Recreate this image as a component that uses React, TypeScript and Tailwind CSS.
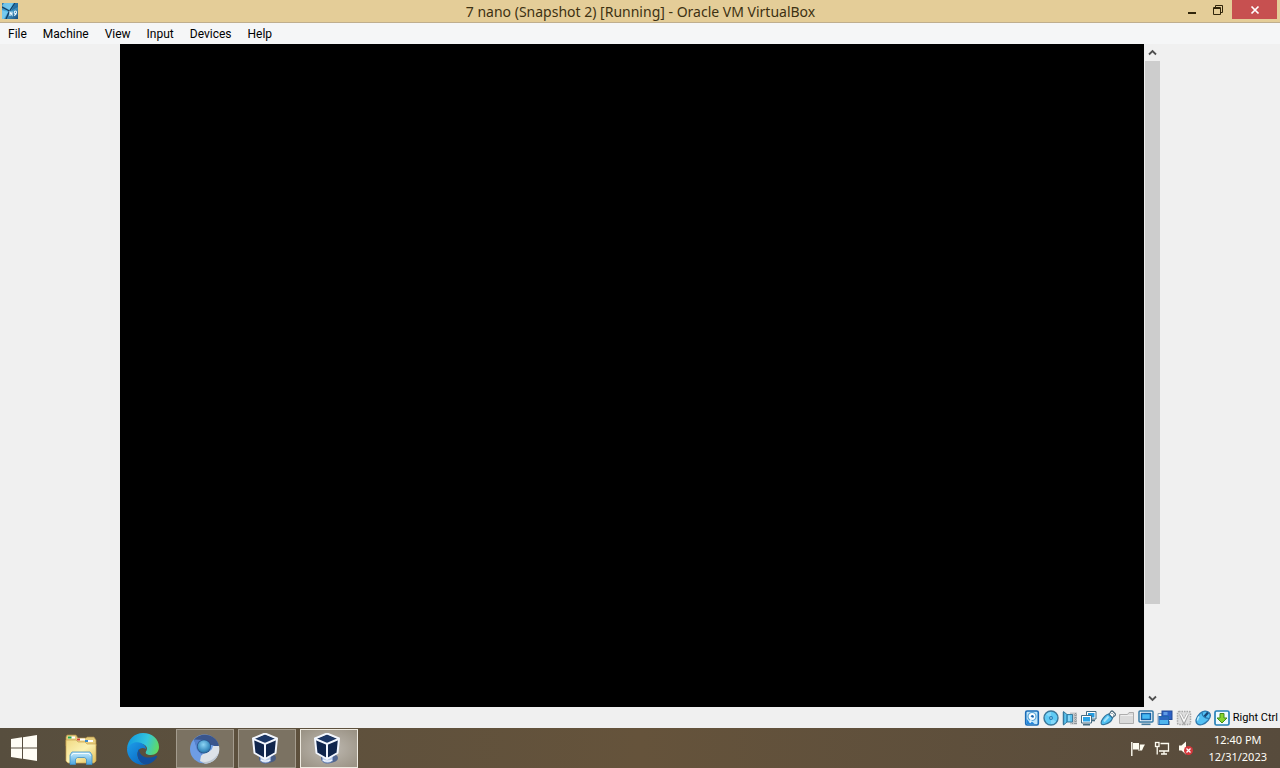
import type { ReactNode } from 'react';

const menus = ['File', 'Machine', 'View', 'Input', 'Devices', 'Help'];

function Svg({ box, className, children }: { box: string; className: string; children: ReactNode }) {
  return (
    <svg viewBox={box} className={className} fill="none" aria-hidden="true">
      {children}
    </svg>
  );
}

function AppIcon() {
  return (
    <Svg box="0 0 16 16" className="size-4 shrink-0">
      <defs>
        <linearGradient id="appBg" x1="0" y1="0" x2="1" y2="1">
          <stop offset="0" stopColor="#2c78ac" />
          <stop offset="0.4" stopColor="#4db4e4" />
          <stop offset="1" stopColor="#1b4c7c" />
        </linearGradient>
      </defs>
      <rect width="16" height="16" fill="url(#appBg)" />
      <path d="M2 0h9L8 7 0 3ZM0 7l6 2-4 7H0Z" fill="#7fd0f2" opacity=".8" />
      <path d="M0 4 7.5 8 13 0M7.5 8 4 16" stroke="#123b60" strokeWidth="1.3" />
      <path d="M13 0h3v4L9 8Z" fill="#1d5d92" opacity=".7" />
      <path d="M8 13V9l2 3V8.5M12 12.5c3-1 3-4.5 1.5-4.5s-2 3 .5 2.5" stroke="#e9f6fd" strokeWidth="1.1" />
    </Svg>
  );
}

const deviceIcons: { label: string; art: ReactNode }[] = [
  {
    label: 'Hard disks',
    art: (
      <>
        <rect x="1.7" y="1" width="12.6" height="14" rx="1.5" fill="#bfe6fb" stroke="#1a6cb8" strokeWidth="1.6" />
        <path d="M2.5 14V8.5l3 4 3-.5 2 2Z" fill="#2286dd" />
        <circle cx="8" cy="6.5" r="4" fill="#fff" stroke="#5aa6d8" strokeWidth="1.2" />
        <circle cx="8.3" cy="6.5" r="1.5" fill="#1565b0" />
        <path d="M8 7 6 13" stroke="#e4f5ff" strokeWidth="1.3" />
      </>
    ),
  },
  {
    label: 'Optical drives',
    art: (
      <>
        <circle cx="8" cy="8" r="7" fill="#5fcaf4" stroke="#3b7799" strokeWidth="1.4" />
        <path d="M8 8 3 4.5A6 6 0 0 1 8 2ZM8 8l5 3.5A6 6 0 0 1 8 14Z" fill="#83d8f9" />
        <circle cx="8" cy="8" r="1.9" fill="#1d79b5" />
        <circle cx="8" cy="8" r=".8" fill="#d9f3ff" />
      </>
    ),
  },
  {
    label: 'Audio',
    art: (
      <>
        <path d="M8 2.5h7v12H8z" fill="#c4c7c9" />
        <path d="M13.5 3v11M10 5h5M10 8h5M10 11h5M10 13.5h5" stroke="#8f9599" strokeDasharray="1 1" />
        <path d="M1.5 1.5 5 4.5h5.5V12H5l-3.5 3Z" fill="#5cc5f0" stroke="#397b9d" />
        <path d="M1.5 2v12.5" stroke="#35799f" strokeWidth="1.5" />
        <path d="M5 4.5V12" stroke="#2b79a4" strokeWidth="1.3" />
        <path d="M7 5.5V11" stroke="#bdeafc" />
      </>
    ),
  },
  {
    label: 'Network',
    art: (
      <>
        <path d="M5.5 1.5h9.500v7.5H5.5z" fill="#fff" stroke="#456b80" />
        <path d="M7 3h6.500v4.500H7z" fill="#249be0" />
        <path d="M11 10.5h3" stroke="#456b80" strokeWidth="1.6" />
        <path d="M.5 5.5h10V13H.5z" fill="#fff" stroke="#456b80" />
        <path d="M2 7h7v4.5H2z" fill="#2ba5e8" />
        <path d="M2 14.7h7" stroke="#456b80" strokeWidth="1.6" />
      </>
    ),
  },
  {
    label: 'USB devices',
    art: (
      <>
        <path d="m9 4.5 2-3q1-1 2 0l2 2q1 1 0 2L12 8Z" fill="#fff" stroke="#4d6b7d" strokeWidth="1.2" />
        <path d="M11.5 3.5h1M13 5h1" stroke="#4d6b7d" />
        <path d="M8.5 4C5 5 3 8 1.5 11c-1 3 0 4 3 3.500C8 13.5 11.5 11.5 12.5 8Z" fill="#4fc0f2" stroke="#35759c" strokeWidth="1.2" />
        <path d="m4 11.5 4.500-5" stroke="#a3e3fb" strokeWidth="2" />
      </>
    ),
  },
  {
    label: 'Shared folders',
    art: (
      <>
        <path d="M.5 13.5v-9h8l1.500-2h4.500v11Z" fill="#dadada" stroke="#adadad" />
        <path d="M2 5.5h12" stroke="#eee" />
      </>
    ),
  },
  {
    label: 'Display',
    art: (
      <>
        <rect x="1" y="1" width="14" height="11" rx="1" fill="#fff" stroke="#3579a5" strokeWidth="1.5" />
        <rect x="3.5" y="3.5" width="9" height="6" fill="#48bbf4" stroke="#1563a8" strokeWidth="1.5" />
        <path d="M3.5 14.3h9" stroke="#477b9d" strokeWidth="1.6" />
      </>
    ),
  },
  {
    label: 'Recording',
    art: (
      <>
        <path d="M1 3.5h4v11H1z" fill="#fff" stroke="#849caf" />
        <rect x="5" y="1" width="10" height="8.5" fill="#2c60c4" stroke="#234b98" />
        <path d="M6.5 2h4v3h-4z" fill="#5f9ce5" />
        <rect x="2" y="6.5" width="9.5" height="8" fill="#50b5ee" stroke="#2066b0" />
        <path d="M2.5 7H11v3H2.500z" fill="#2b66be" />
        <path d="M12.5 11v4" stroke="#8e9baa" />
      </>
    ),
  },
  {
    label: 'Processor',
    art: (
      <>
        <rect x="1.5" y="1.5" width="13" height="13" rx="1.5" fill="#dedede" stroke="#a9a9a9" strokeDasharray="1.5 1" strokeWidth="1.5" />
        <path d="m4.5 4 3.500 8 3.500-8" stroke="#a3a3a3" strokeWidth="3" />
        <path d="M4.5 4 8 11l3.500-7" stroke="#fafafa" strokeWidth="1.5" />
      </>
    ),
  },
  {
    label: 'Mouse integration',
    art: (
      <>
        <path d="M5 3.5c3-3 7-3 9-1s1.500 5-1 8c-3.500 4-8 5.500-10.500 3.500S.5 8 5 3.500Z" fill="#53c0f4" stroke="#2f78ad" strokeWidth="1.3" />
        <path d="M7 2.5c0 3 2 5.500 7 6" stroke="#2878ae" strokeWidth="1.2" />
        <path d="M9.5 6.500 13 2.500" stroke="#174777" strokeWidth="2.4" />
        <path d="M4 6.5c-1.500 2-1.500 3-1.500 4" stroke="#bdefff" strokeWidth="1.5" />
      </>
    ),
  },
  {
    label: 'Keyboard capture',
    art: (
      <>
        <rect x="1" y="1" width="14" height="14" rx="1.5" fill="#eefaff" stroke="#2580b8" strokeWidth="1.7" />
        <path d="M6 3.5h4V8h3l-5 5-5-5h3Z" fill="#86d42e" stroke="#438c18" />
      </>
    ),
  },
];

function StartLogo() {
  return (
    <Svg box="0 0 26 26" className="size-[26px]">
      <path d="M0 4 11 2.300V12.500H0ZM12 2.200 26 0V12.500H12ZM0 13.500H11V23.700L0 22ZM12 13.500H26V26L12 23.800Z" fill="#fffdf5" />
    </Svg>
  );
}

function ExplorerIcon() {
  return (
    <Svg box="0 0 32 32" className="size-8">
      <defs>
        <linearGradient id="folder" x1="0" y1="0" x2="1" y2="1">
          <stop offset="0" stopColor="#f1d983" />
          <stop offset=".5" stopColor="#fbf2b4" />
          <stop offset="1" stopColor="#e4bd55" />
        </linearGradient>
        <linearGradient id="stand" x1="0" y1="0" x2="0" y2="1">
          <stop offset="0" stopColor="#c9ecfb" />
          <stop offset="1" stopColor="#4aa5e1" />
        </linearGradient>
      </defs>
      <path d="M1 8V4l1-2h9l2 3h8l1-1h7l2 3v6H1Z" fill="#e6cd7d" stroke="#aa8a43" strokeWidth=".7" />
      <path d="M3 3.500h7v2H3z" fill="#fff" />
      <path d="M3 3.500h3.500v2H3z" fill="#25a449" />
      <path d="M12 5.500h8v2h-8z" fill="#fff" />
      <path d="M12 5.500h3v2h-3z" fill="#d64635" />
      <path d="M20 7h8v2h-8z" fill="#fff" />
      <path d="M20 7h3v2h-3z" fill="#3788c8" />
      <path d="M1 7h10l2 2h7l2 2h9v17l-2 2H3l-2-2Z" fill="url(#folder)" stroke="#c8a350" strokeWidth=".7" />
      <path d="M5 31.500V22l2-3h18l2 3v9.500h-5.500V26l-2-1.500h-7L10.500 26v5.500Z" fill="url(#stand)" stroke="#3f8fc6" strokeWidth=".8" />
      <path d="M6.500 22.500 8 20.500h16l1.500 2" stroke="#f2fcff" />
    </Svg>
  );
}

function EdgeIcon() {
  return (
    <Svg box="0 0 32 32" className="size-8">
      <defs>
        <linearGradient id="edgeTop" x1="2" y1="8" x2="31" y2="17" gradientUnits="userSpaceOnUse">
          <stop stopColor="#159ee0" />
          <stop offset=".55" stopColor="#33c5dd" />
          <stop offset="1" stopColor="#62db5d" />
        </linearGradient>
        <linearGradient id="edgeBody" x1="1" y1="12" x2="19" y2="31" gradientUnits="userSpaceOnUse">
          <stop stopColor="#1c98e5" />
          <stop offset="1" stopColor="#0864bf" />
        </linearGradient>
      </defs>
      <path d="M0 16C.5 6.500 7.500 0 16 0c9 0 16 6 16 14 0 5-3.500 8-8 8-4.500 0-6-1.700-5-3.500 3-4-1-8-6.500-8C6.500 10.500 2 13 0 16Z" fill="url(#edgeTop)" />
      <path d="M0 16c2.500-5 7-7.500 12-6.500 4 .7 7 3 7 6.500-5-3-9 1-8.500 6 .5 5 4 9 9 9.500C9 33.500 0 26 0 16Z" fill="url(#edgeBody)" />
      <path d="M12 16c-4 7 1 15.500 8 15.500 4.500-1 8-4 10-7.500.5-1-.5-1.500-1.500-1C20 27 12 23 12 16Z" fill="#124f9e" />
    </Svg>
  );
}

function ChromiumIcon() {
  return (
    <Svg box="0 0 32 32" className="size-8">
      <defs>
        <radialGradient id="orb" cx=".45" cy=".35" r=".75">
          <stop stopColor="#8cd4f4" />
          <stop offset=".65" stopColor="#3c8fc2" />
          <stop offset="1" stopColor="#1f5c8f" />
        </radialGradient>
      </defs>
      <circle cx="15.5" cy="16" r="14.5" fill="#6e9de5" />
      <path d="M5 6.500C11-.5 25 0 29.500 11l.5 4-7-3h-9l-5 5Z" fill="#3a558c" />
      <path d="M5 6.500 8 17l5 5 3-15Z" fill="#5580cb" />
      <path d="M30 13c2 9-5 17.500-14 17.500L11 28l1-5c3-4 8-3 11-7l1-3Z" fill="#dde2e8" />
      <path d="M11 28c7 3 14-1 18.500-8C28 27 22 30.500 16 30.500Z" fill="#bcc6d1" />
      <circle cx="15" cy="13.5" r="7" fill="#29528a" />
      <circle cx="15" cy="13.5" r="6.3" fill="url(#orb)" />
    </Svg>
  );
}

function VirtualBoxIcon() {
  return (
    <Svg box="2 1 32 32" className="size-8">
      <ellipse cx="18.5" cy="26" rx="8.500" ry="5" fill="#3c568c" opacity=".8" />
      <path d="M11 24v4.500c2 3.500 9 3.500 11 0V24Z" fill="#b9cbe8" stroke="#4663a0" strokeWidth=".8" />
      <path d="M12 28c2 1.500 7 1.500 9 0" stroke="#f0f5ff" strokeWidth="1.2" />
      <path d="M16 1.500 28 6.500 26.500 21 16 27 5.500 21 4 6.500Z" fill="#10254c" stroke="#f3f7ff" strokeWidth="2" strokeLinejoin="round" />
      <path d="M16 3 25 7 16 11 7 7Z" fill="#1c3766" />
      <path d="m4.500 7 11.500 5L27.500 7M16 12v14" stroke="#f3f7ff" strokeWidth="2" />
    </Svg>
  );
}

const tasks: { label: string; icon: ReactNode; style: string }[] = [
  { label: 'File Explorer', icon: <ExplorerIcon />, style: 'border-transparent' },
  { label: 'Microsoft Edge', icon: <EdgeIcon />, style: 'border-transparent' },
  { label: 'Chromium', icon: <ChromiumIcon />, style: 'border-[#a49c8e] bg-[#7b7262]' },
  { label: 'VirtualBox Manager', icon: <VirtualBoxIcon />, style: 'border-[#a49c8e] bg-[#7b7262]' },
  {
    label: '7 nano',
    icon: <VirtualBoxIcon />,
    style: 'border-[#eeeae0] bg-radial from-[#c0bbb3] to-[#989082]',
  },
];

export default function App() {
  return (
    <div className="flex min-h-screen flex-col bg-[#f0f0f0] font-['Noto_Sans','Open_Sans',sans-serif] text-xs text-black select-none">
      <header className="flex h-[23px] items-start border-b border-[#bfae8e] bg-[#e4cd98]">
        <div className="flex flex-1 px-0.5 pt-[3px]">
          <AppIcon />
        </div>
        <h1 className="text-sm leading-[23px] whitespace-nowrap text-[#3d3112]">
          7 nano (Snapshot 2) [Running] - Oracle VM VirtualBox
        </h1>
        <div className="flex flex-1 justify-end pr-[3px]">
          <button aria-label="Minimize" className="flex h-[19px] w-[26px] items-center justify-center">
            <Svg box="0 0 12 12" className="size-3">
              <path d="M2 8h8v2H2z" fill="#30250b" />
            </Svg>
          </button>
          <button aria-label="Restore" className="flex h-[19px] w-[27px] items-center justify-center">
            <Svg box="0 0 12 12" className="size-3">
              <path d="M.5 3.500h7v7h-7zM0 4.500h8M2.500 3V1.500h7v7H8" stroke="#30250b" />
            </Svg>
          </button>
          <button aria-label="Close" className="flex h-[19px] w-[45px] items-center justify-center bg-[#c75050]">
            <Svg box="0 0 10 10" className="size-2.5">
              <path d="m1.500 1.500 7 7m0-7-7 7" stroke="#fff" strokeWidth="1.7" />
            </Svg>
          </button>
        </div>
      </header>

      <nav className="flex h-[21px] items-center bg-[#f5f6f7] font-['Roboto','Noto_Sans',sans-serif]">
        {menus.map((menu) => (
          <button key={menu} className="px-2 leading-5">
            {menu}
          </button>
        ))}
      </nav>

      <main className="flex flex-1 px-[120px]">
        <section aria-label="Virtual machine screen" className="flex-1 bg-black" />
        <div className="flex w-4 flex-col">
          <button aria-label="Scroll up" className="flex h-[17px] items-center justify-center">
            <Svg box="0 0 9 9" className="size-[9px]">
              <path d="m1 6.500 3.500-3.500L8 6.500" stroke="#505050" strokeWidth="1.8" />
            </Svg>
          </button>
          <div className="flex flex-1 flex-col pl-px">
            <div className="grow-[543] bg-[#cdcdcd]" />
            <div className="grow-[86]" />
          </div>
          <button aria-label="Scroll down" className="flex h-[17px] items-center justify-center">
            <Svg box="0 0 9 9" className="size-[9px]">
              <path d="M1 2.500 4.500 6 8 2.500" stroke="#505050" strokeWidth="1.8" />
            </Svg>
          </button>
        </div>
      </main>

      <div className="flex h-[21px] items-center justify-end gap-[3px] pr-0.5">
        {deviceIcons.map(({ label, art }) => (
          <button key={label} aria-label={label}>
            <Svg box="0 0 16 16" className="size-4">
              {art}
            </Svg>
          </button>
        ))}
        <span className="font-['Roboto','Noto_Sans',sans-serif] text-[11px] leading-5 whitespace-nowrap">Right Ctrl</span>
      </div>

      <footer className="flex h-10 items-stretch bg-linear-to-r from-[#574e3e] via-[#65533b] to-[#574b3c] text-[#fffdf7]">
        <button aria-label="Start" className="flex w-12 items-center justify-center">
          <StartLogo />
        </button>
        <div className="flex gap-1 pt-px pl-1">
          {tasks.map(({ label, icon, style }) => (
            <button key={label} aria-label={label} className={`flex w-[58px] items-center justify-center border ${style}`}>
              {icon}
            </button>
          ))}
        </div>
        <div className="ml-auto flex items-center gap-2 pr-[13px]">
          <button aria-label="Action Center">
            <Svg box="0 0 16 16" className="size-4">
              <path d="M1.800 2v14" stroke="#fffdf2" strokeWidth="1.4" />
              <path d="M3 3h6v6.500H3ZM9.800 4.500H15l-1.500 2.500L12 10.500H8V9.800h1.800Z" fill="#fffdf2" />
            </Svg>
          </button>
          <button aria-label="Network status">
            <Svg box="0 0 16 16" className="size-4">
              <path d="M6.500 3.500h8v7.500H5M10 11v3M7 14h6" stroke="#fffdf2" strokeWidth="1.3" />
              <rect x="1.5" y="2.5" width="3.5" height="4" stroke="#fffdf2" strokeWidth="1.3" />
              <path d="M3.200 7v7.500" stroke="#fffdf2" strokeWidth="1.3" />
            </Svg>
          </button>
          <button aria-label="Volume muted">
            <Svg box="0 0 16 16" className="size-4">
              <path d="M1 5.500h2.500L8 1.500v13l-4.500-4H1Z" fill="#fffdf2" />
              <circle cx="10.5" cy="10.5" r="4.5" fill="#d5383c" />
              <path d="m8.500 8.500 4 4m0-4-4 4" stroke="#fff" strokeWidth="1.3" />
            </Svg>
          </button>
          <time className="pl-1.5 text-center text-[11px] leading-[17px] whitespace-nowrap">
            12:40 PM
            <br />
            12/31/2023
          </time>
        </div>
      </footer>
    </div>
  );
}
